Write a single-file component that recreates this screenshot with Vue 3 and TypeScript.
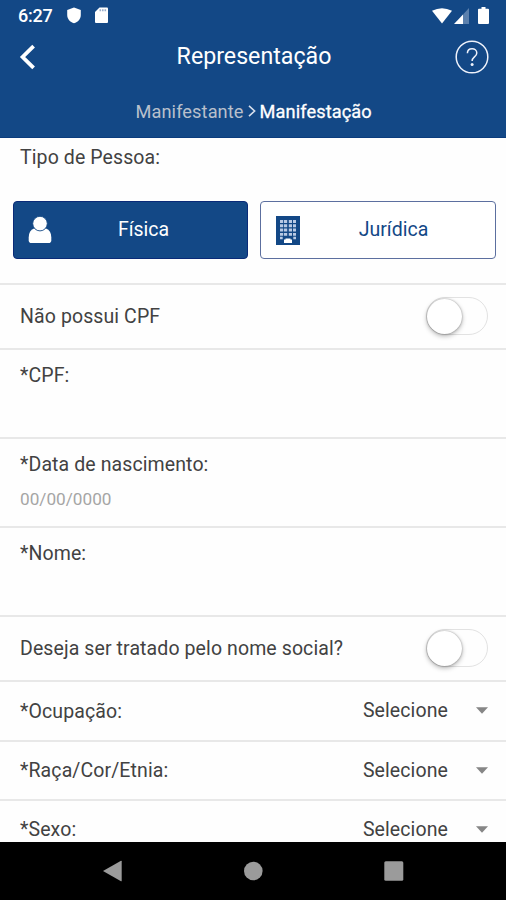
<script setup lang="ts">
import { ref } from 'vue'

type PersonType = 'fisica' | 'juridica'

const personType = ref<PersonType>('fisica')
const semCpf = ref(false)
const nomeSocial = ref(false)

const selects: { id: string; label: string }[] = [
  { id: 'ocupacao', label: '*Ocupação:' },
  { id: 'raca', label: '*Raça/Cor/Etnia:' },
  { id: 'sexo', label: '*Sexo:' },
]
</script>

<template>
  <div class="screen">
    <header class="header">
      <div class="status">
        <span class="clock">6:27</span>
        <svg width="14" height="17" viewBox="0 0 14 17"><path d="M7 0.5 13.8 3v5c0 4-2.8 7-6.8 8.300C3 15 .2 12 .2 8V3z" /></svg>
        <svg class="sdcard" width="13" height="17" viewBox="0 0 13 17">
          <path d="M4.500.5H12q1 0 1 1V15q0 1-1 1H1q-1 0-1-1V5z" />
          <path class="slots" d="M4.500 2.200h1.600v2H4.500zM7 2.200h1.600v2H7zM9.500 2.200h1.600v2H9.500z" />
        </svg>
        <span class="spacer"></span>
        <svg width="20" height="16" viewBox="0 0 20 16"><path d="M0 2.800Q10-2.300 20 2.800L10 15.500z" /></svg>
        <svg class="signal" width="15" height="16" viewBox="0 0 15 16">
          <path class="weak" d="M15 0v16H9V6.400z" />
          <path d="M9 6.400V16H0z" />
        </svg>
        <svg class="battery" width="11" height="17" viewBox="0 0 11 17"><path d="M3.500 0h4v1.800H10q1 0 1 1V16q0 1-1 1H1q-1 0-1-1V2.800q0-1 1-1h2.500z" /></svg>
      </div>
      <div class="titlebar">
        <button class="icon-btn" aria-label="Voltar">
          <svg width="17" height="26" viewBox="0 0 17 26"><path class="chevron" d="M14.600 2.200 3.600 13l11 10.800" /></svg>
        </button>
        <h1 class="title">Representação</h1>
        <button class="icon-btn" aria-label="Ajuda">
          <svg width="34" height="34" viewBox="0 0 34 34">
            <circle class="ring" cx="17" cy="17" r="15.800" />
            <path class="ring" d="M12.400 13.200c0-5.900 9.400-6 9.400-.3 0 3.800-4.700 4.200-4.700 8" />
            <circle class="dot" cx="17.100" cy="24.400" r="1.500" />
          </svg>
        </button>
      </div>
      <nav class="crumbs">
        <span class="previous">Manifestante</span>
        <svg width="8" height="14" viewBox="0 0 8 14"><path d="M1 1.800 6.600 7 1 12.200" /></svg>
        <span class="current">Manifestação</span>
      </nav>
    </header>

    <main class="form">
      <section class="row person">
        <span class="label tipo">Tipo de Pessoa:</span>
        <div class="choices">
          <button class="choice" :class="{ active: personType === 'fisica' }" @click="personType = 'fisica'">
            <svg width="24" height="28" viewBox="0 0 24 28">
              <path d="M6 12.500H18q5.300 2 5.300 9v2.700q0 2.800-2.800 2.800H3.500Q.7 27 .7 24.200V21.500q0-7 5.300-9z" />
              <circle class="head" cx="12" cy="7.600" r="7.300" />
            </svg>
            <span class="fisica">Física</span>
          </button>
          <button class="choice" :class="{ active: personType === 'juridica' }" @click="personType = 'juridica'">
            <svg class="building" width="24" height="29" viewBox="0 0 24 29">
              <path d="M0 0h24v29H0z" />
              <path class="windows" d="M4 4h3.200v3H4zM8 4h3.200v3H8zM12.800 4H16v3h-3.200zM17 4h3v3h-3zM4 8.200h3.200v3H4zM8 8.200h3.200v3H8zM12.800 8.200H16v3h-3.200zM17 8.200h3v3h-3zM4 12.400h3.200v3H4zM8 12.400h3.200v3H8zM12.800 12.400H16v3h-3.200zM17 12.400h3v3h-3zM4 17h3.200v2.700H4zM8 17h3.200v2.700H8zM12.800 17H16v2.700h-3.200zM17 17h3v2.700h-3zM4 20.700h2.700v2.500H4zM17.300 20.700H20v2.500h-2.700z" />
              <path class="door" d="M9.500 22.500h5v1h1.500v3.500H8v-3.500h1.500z" />
            </svg>
            <span class="juridica">Jurídica</span>
          </button>
        </div>
      </section>

      <section class="row toggle-row">
        <span class="label">Não possui CPF</span>
        <button class="toggle" :class="{ on: semCpf }" role="switch" :aria-checked="semCpf" @click="semCpf = !semCpf"><i></i></button>
      </section>

      <section class="row field"><span class="label">*CPF:</span></section>
      <section class="row field">
        <span class="label">*Data de nascimento:</span>
        <span class="placeholder">00/00/0000</span>
      </section>
      <section class="row field"><span class="label">*Nome:</span></section>

      <section class="row toggle-row">
        <span class="label">Deseja ser tratado pelo nome social?</span>
        <button class="toggle" :class="{ on: nomeSocial }" role="switch" :aria-checked="nomeSocial" @click="nomeSocial = !nomeSocial"><i></i></button>
      </section>

      <section v-for="item in selects" :key="item.id" class="row select-row" :class="item.id">
        <span class="label">{{ item.label }}</span>
        <span class="value">Selecione</span>
        <svg width="12" height="7" viewBox="0 0 12 7"><path d="M0 .3h12L6 6.700z" /></svg>
      </section>
    </main>

    <footer class="navbar">
      <svg width="19" height="22" viewBox="0 0 19 22"><path d="M0 11 18 .8q.7-.2.700.5v19.400q0 .7-.7.500z" /></svg>
      <svg width="20" height="20" viewBox="0 0 20 20"><circle cx="10.300" cy="10" r="9.300" /></svg>
      <svg width="20" height="20" viewBox="0 0 20 20"><rect x=".3" y=".3" width="19" height="19.400" rx="1.500" /></svg>
    </footer>
  </div>
</template>

<style>
body {
  margin: 0;
  background: #fff;
}
</style>

<style scoped>
.screen {
  display: flex;
  flex-direction: column;
  width: 506px;
  height: 900px;
  overflow: hidden;
  background: #fefefe;
  color: #424242;
  font-family: Roboto, "Liberation Sans", sans-serif;
}
button {
  margin: 0;
  padding: 0;
  border: 0;
  background: none;
  font: inherit;
}
svg {
  display: block;
  flex: none;
}
.header {
  flex: none;
  box-sizing: border-box;
  height: 138px;
  background: #134886;
  border-bottom: 1px solid #0b3c7d;
  color: #fff;
}
.status {
  display: flex;
  align-items: center;
  box-sizing: border-box;
  height: 31px;
  padding: 0 17px 0 18px;
  fill: #fff;
}
.clock {
  width: 49px;
  font-size: 18px;
  font-weight: 500;
  line-height: 31px;
  letter-spacing: -0.2px;
}
.sdcard { margin-left: 14px; }
.slots { fill: #9aaecb; }
.spacer { flex: 1; }
.signal { margin-left: 2px; }
.weak { fill: #5b80ad; }
.battery { margin-left: 9px; }
.titlebar {
  display: flex;
  align-items: center;
  justify-content: space-between;
  height: 52px;
  padding: 0 17px 0 19px;
}
.icon-btn { color: #fff; }
.title {
  margin: 0;
  padding: 0 0 2px 17px;
  font-size: 23.2px;
  font-weight: 400;
  line-height: 30px;
}
.chevron {
  fill: none;
  stroke: #fff;
  stroke-width: 3.8;
}
.ring {
  fill: none;
  stroke: #eef2fb;
  stroke-width: 1.5;
}
.dot { fill: #eef2fb; }
.crumbs {
  display: flex;
  align-items: center;
  height: 56px;
  padding-left: 135.5px;
  font-size: 18.2px;
  letter-spacing: 0.1px;
}
.crumbs svg {
  margin: 0 4px;
  fill: none;
  stroke: #d7dfec;
  stroke-width: 1.6;
}
.previous { color: #b9c0cc; }
.current { -webkit-text-stroke: 0.3px #fff; }
.form {
  flex: 1;
  min-height: 0;
  overflow: hidden;
}
.row {
  box-sizing: border-box;
  border-bottom: 2px solid #e8e8e8;
}
.label, .value {
  font-size: 19.5px;
  line-height: 24px;
  letter-spacing: 0.1px;
  white-space: nowrap;
}
.person {
  height: 147px;
  padding: 8px 10px 0 13px;
}
.tipo {
  display: block;
  padding-left: 7px;
}
.choices {
  display: grid;
  grid-template-columns: 235px 236px;
  gap: 12px;
  margin-top: 31px;
}
.choice {
  display: flex;
  align-items: center;
  box-sizing: border-box;
  height: 58px;
  padding: 0 14px;
  border: 1px solid #5c6f9f;
  border-radius: 4px;
  background: #fff;
  color: #134886;
  font-size: 19.5px;
  fill: #134886;
}
.building { margin-left: 1px; }
.choice span {
  flex: 1;
  padding-bottom: 1px;
  text-align: center;
}
.fisica { padding-left: 2px; }
.juridica { padding-left: 6px; }
.choice.active {
  border-color: #0a2a78;
  background: #134886;
  color: #fff;
  fill: #fff;
}
.head {
  stroke: #134886;
  stroke-width: 0.9;
}
.choice .windows { fill: #b8c9e4; }
.choice .door { fill: #fff; }
.toggle-row {
  display: flex;
  align-items: center;
  justify-content: space-between;
  height: 65px;
  padding: 0 18px 1px 20px;
}
.toggle-row .label { padding-top: 1px; }
.toggle {
  box-sizing: border-box;
  width: 62px;
  height: 38px;
  border: 1.5px solid #e2e2e2;
  border-radius: 19px;
  background: #fefefe;
}
.toggle i {
  display: block;
  width: 35px;
  height: 35px;
  border-radius: 50%;
  background: #fff;
  box-shadow: 0 2px 5px rgba(0, 0, 0, 0.3), 0 0 2px rgba(0, 0, 0, 0.35);
}
.toggle.on i { margin-left: auto; }
.field {
  display: flex;
  flex-direction: column;
  height: 89px;
  padding: 14px 20px 0;
}
.placeholder {
  margin-top: 12px;
  color: #a5a5a5;
  font-size: 17.2px;
  line-height: 20px;
}
.select-row {
  display: flex;
  align-items: center;
  height: 59px;
  padding: 0 18px 0 20px;
  fill: #868686;
}
.select-row .label { padding-top: 1px; }
.ocupacao { height: 60px; }
.value { margin-left: auto; }
.select-row svg { margin: 0 0 1px 28px; }
.navbar {
  display: flex;
  flex: none;
  align-items: center;
  box-sizing: border-box;
  height: 58px;
  padding-left: 103px;
  gap: 121px;
  background: #000;
  fill: #9b9b9b;
}
</style>
